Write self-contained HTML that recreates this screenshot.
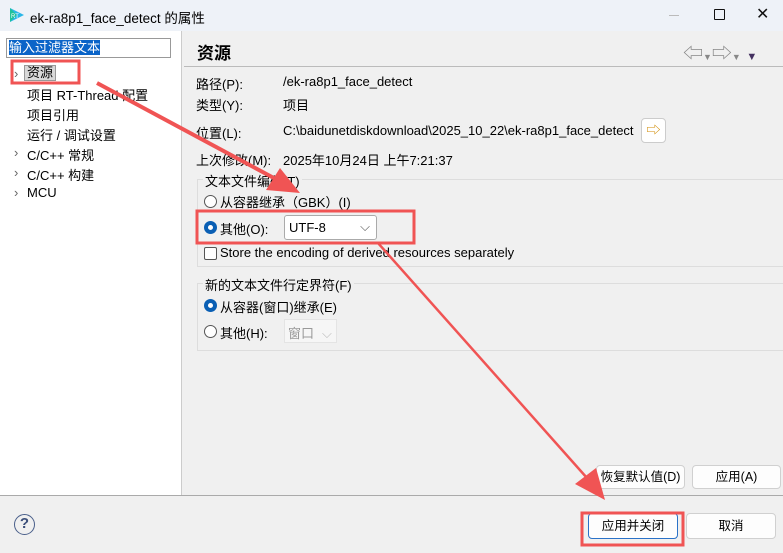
<!DOCTYPE html>
<html><head><meta charset="utf-8"><style>
*{margin:0;padding:0;box-sizing:border-box}
body{width:783px;height:553px;overflow:hidden;background:#f0f0f0;font-family:"Liberation Sans","Noto Sans CJK SC",sans-serif;font-size:13px;color:#000;position:relative}
.a{position:absolute;white-space:nowrap}
.btn{position:absolute;background:#fdfdfd;border:1px solid #d0d0d0;border-radius:4px;text-align:center;font-size:12.5px}
.radio{position:absolute;width:13px;height:13px;border:1px solid #555;border-radius:50%;background:#fff}
.radio.on{border:4px solid #0a5fb4}
</style></head><body>
<div class="a" style="left:0;top:0;width:783px;height:31px;background:#eef2f8"></div>
<svg class="a" style="left:8px;top:6px" width="18" height="18" viewBox="0 0 18 18"><path d="M2 2 L16 9 L2 16 Z" fill="#29b6e8"/><path d="M2 2 L9 9 L2 16Z" fill="#1ec29a"/><text x="3" y="12" font-size="6" fill="#fff" font-family="Liberation Sans">RT</text></svg>
<div class="a" style="left:30px;top:7px;font-size:13.5px">ek-ra8p1_face_detect 的属性</div>
<div class="a" style="left:669px;top:15px;width:10px;height:1px;background:#bbb"></div>
<div class="a" style="left:714px;top:9px;width:11px;height:11px;border:1.3px solid #111;border-radius:1px"></div>
<div class="a" style="left:756px;top:4px;font-size:16px;color:#111">✕</div>
<!-- left panel -->
<div class="a" style="left:0;top:31px;width:182px;height:464px;background:#fff;border-right:1px solid #ccc"></div>
<div class="a" style="left:6px;top:38px;width:165px;height:20px;border:1px solid #999;background:#fff"></div>
<div class="a" style="left:9px;top:40px;background:#0a64c8;color:#fff;font-size:13px;line-height:15px">输入过滤器文本</div>
<div class="a" style="left:14px;top:66px;color:#666">›</div>
<div class="a" style="left:24px;top:65px;background:#d9d9d9;border:1px solid #999;padding:0 2px;line-height:14px">资源</div>
<div class="a" style="left:27px;top:85px">项目 RT-Thread 配置</div>
<div class="a" style="left:27px;top:105px">项目引用</div>
<div class="a" style="left:27px;top:125px">运行 / 调试设置</div>
<div class="a" style="left:14px;top:145px;color:#666">›</div><div class="a" style="left:27px;top:145px">C/C++ 常规</div>
<div class="a" style="left:14px;top:165px;color:#666">›</div><div class="a" style="left:27px;top:165px">C/C++ 构建</div>
<div class="a" style="left:14px;top:185px;color:#666">›</div><div class="a" style="left:27px;top:185px">MCU</div>
<!-- right -->
<div class="a" style="left:197px;top:39px;font-size:17px;font-weight:bold">资源</div>
<div class="a" style="left:184px;top:66px;width:599px;height:1px;background:#bbb"></div>
<div class="a" style="left:683px;top:37px;font-size:20px;color:#888">⇦<span style="font-size:9px">▼</span>⇨<span style="font-size:9px">▼</span>&nbsp;<span style="font-size:11px;color:#443060">▼</span></div>
<div class="a" style="left:196px;top:74px">路径(P):</div><div class="a" style="left:283px;top:74px">/ek-ra8p1_face_detect</div>
<div class="a" style="left:196px;top:95px">类型(Y):</div><div class="a" style="left:283px;top:95px">项目</div>
<div class="a" style="left:196px;top:123px">位置(L):</div><div class="a" style="left:283px;top:123px">C:\baidunetdiskdownload\2025_10_22\ek-ra8p1_face_detect</div>
<div class="a" style="left:641px;top:118px;width:25px;height:25px;border:1px solid #ccc;border-radius:4px;background:#fff;color:#d08a00;text-align:center;line-height:22px;font-size:14px">⇨</div>
<div class="a" style="left:196px;top:150px">上次修改(M):</div><div class="a" style="left:283px;top:150px">2025年10月24日 上午7:21:37</div>
<div class="a" style="left:197px;top:179px;width:586px;height:88px;border:1px solid #ddd;border-right:none"></div>
<div class="a" style="left:203px;top:171px;background:#f0f0f0;padding:0 2px">文本文件编码(T)</div>
<div class="radio" style="left:204px;top:195px"></div><div class="a" style="left:220px;top:192px">从容器继承（GBK）(I)</div>
<div class="radio on" style="left:204px;top:221px"></div><div class="a" style="left:220px;top:219px">其他(O):</div>
<div class="a" style="left:284px;top:215px;width:93px;height:25px;border:1px solid #aaa;border-radius:3px;background:#fff;padding:4px 4px">UTF-8<span style="position:absolute;right:6px;top:3px;color:#555">⌵</span></div>
<div class="a" style="left:204px;top:247px;width:13px;height:13px;border:1px solid #555;border-radius:2px;background:#fff"></div>
<div class="a" style="left:220px;top:245px">Store the encoding of derived resources separately</div>
<div class="a" style="left:197px;top:283px;width:586px;height:68px;border:1px solid #ddd;border-right:none"></div>
<div class="a" style="left:203px;top:275px;background:#f0f0f0;padding:0 2px">新的文本文件行定界符(F)</div>
<div class="radio on" style="left:204px;top:299px"></div><div class="a" style="left:220px;top:297px">从容器(窗口)继承(E)</div>
<div class="radio" style="left:204px;top:325px"></div><div class="a" style="left:220px;top:323px">其他(H):</div>
<div class="a" style="left:284px;top:319px;width:53px;height:24px;background:#f6f6f6;border:1px solid #e4e4e4;color:#999;padding:3px 3px">窗口<span style="color:#bbb;margin-left:8px">⌵</span></div>
<div class="btn" style="left:596px;top:465px;width:89px;height:24px;line-height:22px">恢复默认值(D)</div>
<div class="btn" style="left:692px;top:465px;width:89px;height:24px;line-height:22px">应用(A)</div>
<div class="a" style="left:0;top:495px;width:783px;height:1px;background:#aaa"></div>
<div class="a" style="left:14px;top:514px;width:21px;height:21px;border:1.5px solid #4a5f8a;border-radius:50%;color:#3c4f7a;font-weight:bold;font-size:15px;text-align:center;line-height:18px">?</div>
<div class="btn" style="left:588px;top:513px;width:90px;height:26px;line-height:24px;border-color:#2a72c8">应用并关闭</div>
<div class="btn" style="left:686px;top:513px;width:90px;height:26px;line-height:24px">取消</div>
<svg class="a" style="left:0;top:0" width="783" height="553">
<g fill="none" stroke="#f05454" stroke-width="3">
<rect x="12" y="61" width="67" height="22"/>
<rect x="197" y="211" width="217" height="32"/>
<rect x="582" y="513" width="101" height="32"/>
</g>
<line x1="97" y1="83" x2="285" y2="184" stroke="#f05454" stroke-width="4"/>
<path d="M300 193 L266 190 L280 168 Z" fill="#f05454"/>
<line x1="378" y1="243" x2="595" y2="487" stroke="#f05454" stroke-width="2.5"/>
<path d="M605 500 L575 484 L596 468 Z" fill="#f05454"/>
</svg>
</body></html>
